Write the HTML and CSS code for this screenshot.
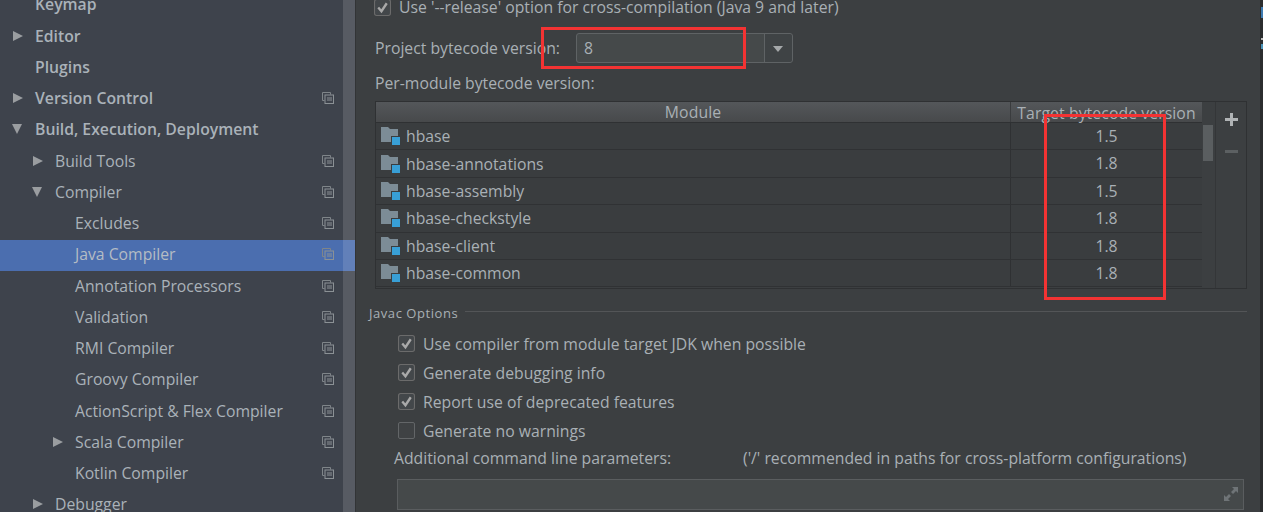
FILE: index.html
```html
<!DOCTYPE html>
<html lang="en">
<head>
<meta charset="utf-8">
<title>Java Compiler</title>
<link rel="stylesheet" href="styles.css">
</head>
<body>
<svg class="defs" width="0" height="0">
  <defs>
    <symbol id="copy" viewBox="0 0 12 12"><path d="M.5.5h8v2M.5.5v8h2" fill="none" stroke="#7f8589"/><rect x="3" y="3" width="8.5" height="8.5" fill="none" stroke="#8b9195"/><path d="M5 6h5M5 8h5" stroke="#8b9195"/></symbol>
    <symbol id="mod" viewBox="0 0 20 18"><path d="M0 0h7l2 2h8v13H0z" fill="#7c8c96"/><rect x="10.5" y="9.5" width="9" height="9" fill="#389fd6" stroke="#3a3d3f"/></symbol>
    <symbol id="check" viewBox="0 0 16 16"><rect x=".5" y=".5" width="15" height="15" rx="2" fill="#43474a" stroke="#6b6b6b"/><path d="M4 8l3 3.5L12 4" fill="none" stroke="#a9a9a9" stroke-width="2.2"/></symbol>
  </defs>
</svg>
<div class="app">
  <aside class="side">
    <ul class="tree">
      <li class="row bold l0"><span class="tw"></span><span class="lb">Keymap</span></li>
      <li class="row bold l0"><span class="tw r"></span><span class="lb">Editor</span></li>
      <li class="row bold l0"><span class="tw"></span><span class="lb">Plugins</span></li>
      <li class="row bold l0"><span class="tw r"></span><span class="lb">Version Control</span><svg class="cp"><use href="#copy"/></svg></li>
      <li class="row bold l0"><span class="tw d"></span><span class="lb">Build, Execution, Deployment</span></li>
      <li class="row l1"><span class="tw r"></span><span class="lb">Build Tools</span><svg class="cp"><use href="#copy"/></svg></li>
      <li class="row l1"><span class="tw d"></span><span class="lb">Compiler</span><svg class="cp"><use href="#copy"/></svg></li>
      <li class="row l2"><span class="tw"></span><span class="lb">Excludes</span><svg class="cp"><use href="#copy"/></svg></li>
      <li class="row l2 sel"><span class="tw"></span><span class="lb">Java Compiler</span><svg class="cp"><use href="#copy"/></svg></li>
      <li class="row l2"><span class="tw"></span><span class="lb">Annotation Processors</span><svg class="cp"><use href="#copy"/></svg></li>
      <li class="row l2"><span class="tw"></span><span class="lb">Validation</span><svg class="cp"><use href="#copy"/></svg></li>
      <li class="row l2"><span class="tw"></span><span class="lb">RMI Compiler</span><svg class="cp"><use href="#copy"/></svg></li>
      <li class="row l2"><span class="tw"></span><span class="lb">Groovy Compiler</span><svg class="cp"><use href="#copy"/></svg></li>
      <li class="row l2"><span class="tw"></span><span class="lb">ActionScript &amp; Flex Compiler</span><svg class="cp"><use href="#copy"/></svg></li>
      <li class="row l2"><span class="tw r"></span><span class="lb">Scala Compiler</span><svg class="cp"><use href="#copy"/></svg></li>
      <li class="row l2"><span class="tw"></span><span class="lb">Kotlin Compiler</span><svg class="cp"><use href="#copy"/></svg></li>
      <li class="row l1"><span class="tw r"></span><span class="lb">Debugger</span></li>
    </ul>
    <div class="side-scroll"></div>
  </aside>
  <main class="main">
    <label class="release"><svg class="cb"><use href="#check"/></svg>Use '--release' option for cross-compilation (Java 9 and later)</label>
    <div class="project">
      <span class="pj">Project bytecode version:</span>
      <div class="combo"><span class="val">8</span><span class="arrow"></span></div>
    </div>
    <div class="per">Per-module bytecode version:</div>
    <div class="tablewrap">
      <div class="table">
        <div class="thead"><div class="c1">Module</div><div class="c2">Target bytecode version</div></div>
        <div class="trow"><div class="c1"><svg class="mod"><use href="#mod"/></svg>hbase</div><div class="c2">1.5</div></div>
        <div class="trow"><div class="c1"><svg class="mod"><use href="#mod"/></svg>hbase-annotations</div><div class="c2">1.8</div></div>
        <div class="trow"><div class="c1"><svg class="mod"><use href="#mod"/></svg>hbase-assembly</div><div class="c2">1.5</div></div>
        <div class="trow"><div class="c1"><svg class="mod"><use href="#mod"/></svg>hbase-checkstyle</div><div class="c2">1.8</div></div>
        <div class="trow"><div class="c1"><svg class="mod"><use href="#mod"/></svg>hbase-client</div><div class="c2">1.8</div></div>
        <div class="trow"><div class="c1"><svg class="mod"><use href="#mod"/></svg>hbase-common</div><div class="c2">1.8</div></div>
      </div>
      <div class="vbar"><div class="thumb"></div></div>
      <div class="tools"><span class="plus"></span><span class="minus"></span></div>
    </div>
    <div class="group"><span>Javac Options</span><i></i></div>
    <ul class="opts">
      <li><svg class="cb"><use href="#check"/></svg>Use compiler from module target JDK when possible</li>
      <li><svg class="cb"><use href="#check"/></svg>Generate debugging info</li>
      <li><svg class="cb"><use href="#check"/></svg>Report use of deprecated features</li>
      <li><span class="cb off"></span>Generate no warnings</li>
    </ul>
    <div class="params"><span class="pl">Additional command line parameters:</span><span>('/' recommended in paths for cross-platform configurations)</span></div>
    <div class="field">
      <svg class="expand" viewBox="0 0 16 16"><path d="M9 1h6v6l-2-2-3 3-2-2 3-3zM7 15H1V9l2 2 3-3 2 2-3 3z" fill="#6f7477"/></svg>
    </div>
  </main>
  <div class="edge"><b class="e1"></b><b class="e2"></b><b class="e3"></b></div>
</div>
<div class="mark m1"></div>
<div class="mark m2"></div>
</body>
</html>
```

FILE: styles.css
```css
* { box-sizing: border-box; }
html, body { margin: 0; height: 100%; overflow: hidden; }
body {
  width: 1263px; height: 512px; position: relative;
  background: #3c3f41; color: #a9b0b5;
  font: 15.75px/20px "Open Sans", "Noto Sans", sans-serif;
}
.defs { position: absolute; }
.app { display: flex; height: 512px; overflow: hidden; }
ul { list-style: none; margin: 0; padding: 0; }

.side { width: 355px; flex: none; background: #3e434c; overflow: hidden; position: relative; }
.tree { width: 355px; margin-top: -10.4px; }
.side-scroll { position: absolute; left: 343px; top: 0; bottom: 0; width: 12px; background: rgba(255, 255, 255, .13); }
.row { height: 31.27px; display: flex; align-items: center; padding-right: 21px; padding-bottom: 2px; color: #aab2b9; }
.l0 { padding-left: 13px; }
.l1 { padding-left: 33px; }
.l2 { padding-left: 53px; }
.bold { font-weight: 600; }
.sel { background: #4b6eaf; color: #b4bcc4; }
.tw { width: 22px; flex: none; height: 12px; position: relative; }
.tw.r::before { content: ""; position: absolute; left: 0; top: 1px; border-left: 10px solid #9a9da0; border-top: 5px solid transparent; border-bottom: 5px solid transparent; }
.tw.d::before { content: ""; position: absolute; left: -1px; top: 1px; border-top: 10px solid #9a9da0; border-left: 5.5px solid transparent; border-right: 5.5px solid transparent; }
.lb { flex: 1; white-space: nowrap; }
.cp { width: 12px; height: 12px; flex: none; margin-left: auto; }

.main { flex: 1; min-width: 0; padding: 0 13px 0 13px; border-left: 1px solid #323436; }
.edge { width: 3px; flex: none; background: #2b2d2f; position: relative; }
.edge b { position: absolute; left: 1px; width: 2px; }
.e1 { top: 7px; height: 11px; background: #3d7ab0; }
.e2 { top: 38px; height: 2px; background: #b9b9b9; }
.e3 { top: 44px; height: 5px; background: #4a93b8; }
.cb { width: 17px; height: 17px; flex: none; display: inline-block; }
.cb.off { border: 1px solid #636668; border-radius: 2px; background: #3f4244; }
.release { display: flex; align-items: center; gap: 8px; height: 20px; margin: -3px 0 0 5px; white-space: nowrap; }
.project { display: flex; align-items: center; height: 34px; margin: 14px 0 0 6px; }
.pj { width: 201px; flex: none; white-space: nowrap; }
.combo { width: 217px; height: 30px; border: 1px solid #5f6365; border-radius: 3px; display: flex; background: #45494a; }
.val { flex: 1; padding-left: 7px; line-height: 28px; border-right: 1px solid #5f6365; }
.arrow { width: 27px; position: relative; background: #3f4345; border-radius: 0 3px 3px 0; }
.arrow::after { content: ""; position: absolute; left: 8px; top: 12px; border-top: 6px solid #a5a8aa; border-left: 5.5px solid transparent; border-right: 5.5px solid transparent; }
.per { margin: 8px 0 0 6px; height: 20px; }
.tablewrap { display: flex; width: 872px; height: 188px; margin: 8px 0 0 6px; border: 1px solid #2f3133; }
.table { width: 826px; flex: none; }
.thead { display: flex; height: 21px; background: linear-gradient(#54575a, #47494b); border-bottom: 1px solid #2f3133; line-height: 22px; text-align: center; letter-spacing: .09px; }
.trow { display: flex; height: 27.4px; border-bottom: 1px solid #303234; background: #3a3d3f; line-height: 26px; }
.c1 { width: 635px; flex: none; display: flex; align-items: center; border-right: 1px solid #2f3133; white-space: nowrap; }
.thead .c1 { justify-content: center; border-right-color: #3a3c3e; }
.c2 { flex: 1; text-align: center; white-space: nowrap; }
.mod { width: 20px; height: 18px; margin: 0 5px 0 5px; flex: none; }
.vbar { width: 14px; flex: none; background: #3c3f41; border-right: 1px solid #343638; position: relative; }
.thumb { position: absolute; left: 1px; top: 23px; width: 10px; height: 36px; background: #5a5e60; }
.tools { flex: 1; position: relative; }
.plus, .minus { position: absolute; left: 9px; width: 13px; height: 3px; background: #b0b3b5; }
.plus { top: 16px; }
.plus::after { content: ""; position: absolute; left: 5px; top: -5px; width: 3px; height: 13px; background: #b0b3b5; }
.minus { top: 48px; background: #5c6062; }
.group { display: flex; align-items: center; margin: 14px 0 0 0; height: 20px; font-size: 13px; letter-spacing: .55px; gap: 7px; }
.group i { flex: 1; height: 1px; background: #535557; margin-top: -3px; }
.opts { margin: 6px 0 0 29px; }
.opts li { height: 29.1px; display: flex; align-items: center; gap: 8px; white-space: nowrap; }
.params { display: flex; margin: 3px 0 0 25px; height: 20px; white-space: nowrap; }
.pl { width: 349px; flex: none; }
.field { height: 31px; width: 847px; margin: 11px 0 0 28px; border: 1px solid #5a5d5f; background: #45494a; position: relative; }
.expand { position: absolute; right: 4px; top: 6px; width: 16px; height: 16px; }

.mark { position: absolute; border: 3px solid #f33333; pointer-events: none; }
.m1 { left: 541px; top: 27px; width: 205px; height: 42px; }
.m2 { left: 1044px; top: 114px; width: 122px; height: 186px; }
```
